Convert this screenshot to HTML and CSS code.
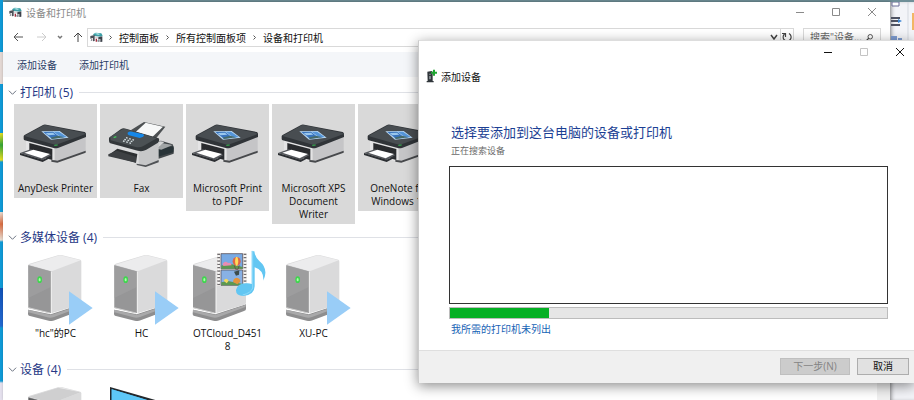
FILE: index.html
```html
<!DOCTYPE html>
<html lang="zh-CN">

<head>
    <meta charset="UTF-8">
    <title>设备和打印机</title>
    <link rel="stylesheet" href="styles.css">
</head>

<body>
    <!-- shared icons -->
    <svg class="sprite" aria-hidden="true">
        <symbol id="icon-app" viewBox="0 0 39 33">
            <path d="M9 7 L17 2 L34 4 L38 11 L31 14 L13 12 Z" fill="#3c9fa6"/>
            <path d="M14 5 L22 3 L31 6 L25 9 Z" fill="#a5dde0"/>
            <path d="M1 12 L14 9 L14 27 L9 28 L9 18 L1 20 Z" fill="#4b4f57"/>
            <path d="M15 13 L30 15 L30 20 L15 19 Z" fill="#d7d7d9"/>
            <path d="M17 20 L21 20 L21 29 L17 29 Z" fill="#a32c3c"/>
            <path d="M25 16 L37 13 L37 29 L31 30 L31 21 L25 23 Z" fill="#3d424b"/>
            <path d="M4 21 L7 21 L7 26 L2 27 Z M22 24 L29 23 L29 29 L23 30 Z" fill="#8a8f98"/>
        </symbol>
        <symbol id="icon-chevron" viewBox="0 0 10 10">
            <path d="M3 1 L7 5 L3 9" fill="none" stroke="#555" stroke-width="2"/>
        </symbol>
        <symbol id="icon-fold" viewBox="0 0 10 10">
            <path d="M1 3 L5 7 L9 3" fill="none" stroke="#5c6575" stroke-width="1"/>
        </symbol>
        <symbol id="icon-min" viewBox="0 0 10 10">
            <path d="M1 5.5 H9" fill="none" stroke="currentColor"/>
        </symbol>
        <symbol id="icon-max" viewBox="0 0 10 10">
            <path d="M1.5 1.5 H8.5 V8.5 H1.5 Z" fill="none" stroke="currentColor"/>
        </symbol>
        <symbol id="icon-close" viewBox="0 0 10 10">
            <path d="M1 1 L9 9 M9 1 L1 9" fill="none" stroke="currentColor"/>
        </symbol>

        <symbol id="printer" viewBox="0 0 249 234">
            <path d="M36 106 L122 128 L122 174 L36 153 Z" fill="#e4e4e5"/>
            <path d="M122 130 L215 96 L215 144 L130 173 L122 173 Z" fill="#c5c5c7"/>
            <path d="M122 169 L130 170 L215 140 L215 146 L130 176 L112 173 L112 168 Z" fill="#47494c"/>
            <path d="M46 117 L115 135 L115 168 L46 149 Z" fill="#292b2e"/>
            <path d="M18 147 L50 136 L113 153 L86 168 Z" fill="#55585d"/>
            <path d="M18 147 L86 167 L113 155 L113 160 L86 174 L18 153 Z" fill="#2c2f33"/>
            <path d="M31 146 L58 137 L108 150 L83 163 Z" fill="#fff"/>
            <path d="M29 97 Q29 94 33 92 L87 63 Q91 60 97 62 L212 84 Q217 86 216 93 L216 99 L132 132 Q125 134 119 132 L32 109 Q29 108 29 104 Z" fill="#303438"/>
            <path d="M31 96 L87 65 Q91 62 97 64 L212 87 L213 91 L131 121 Q124 123 118 121 Z" fill="#484d51"/>
            <path d="M82 82 L137 81 L164 101 L111 107 Z" fill="#b9d8f3"/>
            <path d="M88 84 L117 83 L140 101 L114 104 Z" fill="#3873bd"/>
            <path d="M119 83 L135 83 L158 99 L143 101 Z" fill="#5595d9"/>
            <path d="M95 87 L117 86 L124 92 L103 94 Z" fill="#9bc7ec"/>
            <path d="M109 101 L132 95 L151 100 L114 105 Z" fill="#476a69"/>
            <path d="M121 124 L131 123" stroke="#35bd4f" stroke-width="3"/>
        </symbol>

        <symbol id="fax" viewBox="0 0 249 234">
            <path d="M145 128 Q160 113 183 110 L218 121 L222 132 L221 149 L176 164 L145 160 Z" fill="#44494c"/>
            <path d="M148 148 Q148 125 171 114 Q183 109 192 115 Q184 128 171 133 L162 155 Z" fill="#d5d6d6"/>
            <path d="M173 135 L220 127 L220 145 L174 158 Z" fill="#293438"/>
            <path d="M171 134 L188 118 L218 123 L184 137 Z" fill="#a1a5a6"/>
            <path d="M32 108 L125 136 L125 182 L111 180 L30 158 Z" fill="#dadbdc"/>
            <path d="M116 136 L176 115 L176 174 L137 187 L116 182 Z" fill="#c6c7c8"/>
            <path d="M30 150 L52 134 L112 150 L108 176 L28 154 Z" fill="#2d3032"/>
            <path d="M25 151 L50 140 L108 158 L108 176 L25 157 Z" fill="#3d4043"/>
            <path d="M110 179 L137 184 L176 168 L176 175 L137 189 L110 183 Z" fill="#505356"/>
            <path d="M92 79 L132 54 L196 68 L166 106 Z" fill="#4c5052"/>
            <path d="M107 84 L137 56 L189 68 L157 99 Z" fill="#f7f8f8"/>
            <path d="M27 101 L62 76 Q69 71 78 74 L176 103 Q180 108 174 116 L139 137 Q127 144 113 140 L31 118 Q26 116 27 101 Z" fill="#33383b"/>
            <path d="M31 98 L65 77 Q70 73 79 76 L170 103 L130 126 Q120 132 107 129 L32 109 Z" fill="#4b5154"/>
            <path d="M83 86 Q88 81 96 83 L130 91 Q135 95 128 99 L119 102 L87 94 Q81 91 83 86 Z" fill="#1688e8"/>
            <path d="M78 101 L105 109 M73 106 L101 114 M69 111 L97 119" stroke="#d7e1e4" stroke-width="4" stroke-dasharray="5 5" fill="none"/>
            <path d="M41 101 L49 98" stroke="#42c65a" stroke-width="4"/>
        </symbol>

        <symbol id="server" viewBox="0 0 249 234">
            <path d="M43 182 L110 196 L202 166 L202 180 Q202 184 196 186 L122 214 Q114 218 104 215 L45 200 Q42 198 42 194 Z" fill="#8e8e8f"/>
            <path d="M43 182 L100 196 Q110 199 120 195 L202 167 L200 174 L120 204 Q110 208 100 205 L43 190 Z" fill="#a9a9aa"/>
            <path d="M43 49 Q42 46 47 44 L132 19 Q138 17 145 19 L199 32 Q203 34 202 40 L202 161 Q202 165 197 167 L112 193 L43 177 Z" fill="#dadadb"/>
            <path d="M45 47 L132 20 Q138 18 145 20 L200 34 L113 67 Z" fill="#ececed"/>
            <path d="M43 49 L109 67 Q112 68 112 72 L112 192 L106 192 L43 176 Z" fill="#969697"/>
            <path d="M43 49 L109 67 L109 115 L43 147 Z" fill="#a2a2a3" opacity=".6"/>
            <path d="M112 69 L112 192" stroke="#f5f5f5" stroke-width="3"/>
            <path d="M43 176 L108 192" stroke="#d0d0d0" stroke-width="3"/>
            <ellipse cx="77" cy="92" rx="7" ry="10" fill="#3fd64e"/>
            <ellipse cx="77" cy="92" rx="3" ry="5" fill="#aaffa8"/>
        </symbol>

        <symbol id="pc" viewBox="0 0 249 234">
            <use href="#server"/>
            <path d="M165 127 L236 177 L165 227 Z" fill="#99cdf7"/>
        </symbol>

        <symbol id="media" viewBox="0 0 249 234">
            <use href="#server" x="-22"/>
            <path d="M93 12 H182 V110 H93 Z" fill="#ece8e5"/>
            <path d="M98 14 V109 M177 14 V109" stroke="#706d70" stroke-width="8" stroke-dasharray="4 6"/>
            <path d="M98 14 V109 M177 14 V109" stroke="#f9f9f9" stroke-width="5" stroke-dasharray="5 5" stroke-dashoffset="5"/>
            <path d="M105 14 H170 V59 H105 Z" fill="#79aae4" stroke="#504248" stroke-width="2"/>
            <path d="M105 63 H170 V109 H105 Z" fill="#88b1e5" stroke="#504248" stroke-width="2"/>
            <path d="M106 50 L126 43 L170 54 V59 H106 Z M106 100 L126 96 L170 105 V109 H106 Z" fill="#5c9850"/>
            <path d="M110 44 Q118 33 126 42 Q136 38 137 49 L112 51 Z" fill="#e98cb2"/>
            <path d="M113 95 Q120 84 128 95 L122 103 Z" fill="#f3d85d"/>
            <ellipse cx="152" cy="37" rx="12" ry="13" fill="#df6747"/>
            <path d="M150 24 Q144 37 150 50 L154 50 Q160 37 154 24 Z" fill="#ffdc58"/>
            <path d="M145 50 L149 61 H156 L160 49" fill="none" stroke="#633b40" stroke-width="2"/>
            <path d="M141 99 Q142 87 152 86 Q163 87 163 98 L154 106 Z" fill="#e4943c"/>
            <path d="M144 68 L150 80 L159 77 L160 64 Z" fill="#3c4b4d"/>
            <path d="M197 7 H205 Q207 24 220 36 Q249 60 232 95 Q234 64 206 55 V112 Q205 139 172 141 Q149 140 150 123 Q154 104 179 103 Q190 102 197 105 Z" fill="#62c6f2"/>
            <path d="M197 7 H200 V117 Q195 132 170 138" fill="none" stroke="#8ddafa" stroke-width="3"/>
        </symbol>

        <symbol id="tower" viewBox="0 0 249 234">
            <use href="#server"/>
            <path d="M44 50 L110 68 V192 L44 176 Z" fill="#5d5e60"/>
            <path d="M45 47 L132 20 L200 34 L113 67 Z" fill="#cfcfd0"/>
        </symbol>

        <symbol id="monitor" viewBox="0 0 249 234">
            <path d="M30 18 L180 61 V185 L30 130 Z" fill="#24282c"/>
            <path d="M35 25 L175 67 V177 L35 125 Z" fill="#42b7ef"/>
            <path d="M35 25 L175 67 V93 L35 70 Z" fill="#5dc7f7"/>
        </symbol>
    </svg>

    <div class="window">
        <header class="titlebar">
            <svg class="app-icon"><use href="#icon-app"/></svg>
            <span class="caption">设备和打印机</span>
            <div class="controls">
                <button aria-label="最小化"><svg><use href="#icon-min"/></svg></button>
                <button aria-label="最大化"><svg><use href="#icon-max"/></svg></button>
                <button aria-label="关闭"><svg><use href="#icon-close"/></svg></button>
            </div>
        </header>

        <div class="navbar">
            <div class="history">
                <button aria-label="后退"><svg viewBox="0 0 12 12"><path d="M11 6 H2 M6 2 L2 6 L6 10" fill="none" stroke="#555"/></svg></button>
                <button aria-label="前进" disabled><svg viewBox="0 0 12 12"><path d="M1 6 H10 M6 2 L10 6 L6 10" fill="none" stroke="#ccc"/></svg></button>
                <button class="recent" aria-label="最近浏览的位置"><svg viewBox="0 0 12 12"><path d="M4 5 L6 7 L8 5" fill="none" stroke="#777" stroke-width="1.5"/></svg></button>
                <button aria-label="上移"><svg viewBox="0 0 12 12"><path d="M6 11 V2 M2 6 L6 2 L10 6" fill="none" stroke="#444"/></svg></button>
            </div>
            <div class="address">
                <svg class="app-icon"><use href="#icon-app"/></svg>
                <nav class="breadcrumb">
                    <svg><use href="#icon-chevron"/></svg>
                    <a href="#">控制面板</a>
                    <svg><use href="#icon-chevron"/></svg>
                    <a href="#">所有控制面板项</a>
                    <svg><use href="#icon-chevron"/></svg>
                    <a href="#">设备和打印机</a>
                </nav>
                <button class="dropdown" aria-label="上一个位置"><svg viewBox="0 0 12 12"><path d="M3 4 L6 8 L9 4" fill="none" stroke="#444" stroke-width="1.5"/></svg></button>
                <button class="refresh" aria-label="刷新"><svg viewBox="0 0 12 12"><path d="M8 2.5 A4 4 0 1 1 3.5 3 M1 2.5 H4.5 V6" fill="none" stroke="#444" stroke-width="1.2"/></svg></button>
            </div>
            <div class="search">
                <input type="text" aria-label="搜索" placeholder='搜索"设备...'>
                <svg viewBox="0 0 12 12"><circle cx="7" cy="5" r="3" fill="none" stroke="#444" stroke-width="1.2"/><path d="M5 7 L1 11" stroke="#444" stroke-width="1.5"/></svg>
            </div>
        </div>

        <div class="toolbar">
            <button>添加设备</button>
            <button>添加打印机</button>
        </div>

        <main class="content">
            <section>
                <h2><svg><use href="#icon-fold"/></svg>打印机 (5)</h2>
                <ul class="items">
                    <li class="item selected"><svg><use href="#printer"/></svg><span>AnyDesk Printer</span></li>
                    <li class="item selected"><svg><use href="#fax"/></svg><span>Fax</span></li>
                    <li class="item selected"><svg><use href="#printer"/></svg><span>Microsoft Print to PDF</span></li>
                    <li class="item selected"><svg><use href="#printer"/></svg><span>Microsoft XPS Document Writer</span></li>
                    <li class="item selected"><svg><use href="#printer"/></svg><span>OneNote for Windows 10</span></li>
                </ul>
            </section>
            <section>
                <h2><svg><use href="#icon-fold"/></svg>多媒体设备 (4)</h2>
                <ul class="items">
                    <li class="item"><svg><use href="#pc"/></svg><span>"hc"的PC</span></li>
                    <li class="item"><svg><use href="#pc"/></svg><span>HC</span></li>
                    <li class="item"><svg><use href="#media"/></svg><span>OTCloud_D451<br>8</span></li>
                    <li class="item"><svg><use href="#pc"/></svg><span>XU-PC</span></li>
                </ul>
            </section>
            <section>
                <h2><svg><use href="#icon-fold"/></svg>设备 (4)</h2>
                <ul class="items">
                    <li class="item"><svg><use href="#tower"/></svg></li>
                    <li class="item"><svg><use href="#monitor"/></svg></li>
                </ul>
            </section>
        </main>
    </div>

    <!-- strip of the window behind -->
    <aside class="behind">
        <svg viewBox="0 0 24 40">
            <path d="M2 0 H9 V4 H2 Z" fill="#fff" stroke="#6b6d98"/>
            <path d="M1 16 H10 M1 19 H8 M1 23 H10" stroke="#4e5261" stroke-width="2"/>
            <path d="M8 17 L12 19 L8 21 Z" fill="#3c86d4"/>
            <path d="M1 34 H7 V39 H1 Z M8 36 H12 V40 H8 Z" fill="#7e9cd0"/>
            <path d="M18 0 V40" stroke="#d5d9e0"/>
            <path d="M22 11 H24 V28 H22 Z" fill="#f2b665"/>
        </svg>
    </aside>

    <div class="dialog" role="dialog" aria-labelledby="dialogTitle">
        <div class="controls">
            <button aria-label="最小化"><svg><use href="#icon-min"/></svg></button>
            <button aria-label="最大化" disabled><svg><use href="#icon-max"/></svg></button>
            <button aria-label="关闭"><svg><use href="#icon-close"/></svg></button>
        </div>
        <div class="dialog-name">
            <svg viewBox="0 0 33 42">
                <path d="M4 8 L17 6 L20 9 V36 H23 V40 H2 V36 H5 Z" fill="#30363b"/>
                <path d="M9 14 H15 V17 H9 Z M9 21 H15 V31 H9 Z" fill="#7e868b"/>
                <path d="M21 2 H27 V8 H33 V14 H27 V20 H21 V14 H15 V8 H21 Z" fill="#20a632"/>
            </svg>
            <span id="dialogTitle">添加设备</span>
        </div>
        <div class="dialog-body">
            <h1>选择要添加到这台电脑的设备或打印机</h1>
            <label for="searchProgress">正在搜索设备</label>
            <div class="device-list" role="listbox" aria-label="设备"></div>
            <progress id="searchProgress" value="227" max="1000"></progress>
            <a href="#">我所需的打印机未列出</a>
        </div>
        <footer class="dialog-footer">
            <button class="next" disabled>下一步(N)</button>
            <button class="cancel">取消</button>
        </footer>
    </div>
</body>

</html>
```
FILE: styles.css
```css
* {
    box-sizing: border-box;
}

body {
    margin: 0;
    height: 100vh;
    overflow: hidden;
    position: relative;
    display: flex;
    padding-top: 2px;
    padding-left: 3px;
    font-family: "Open Sans", "Noto Sans CJK SC", sans-serif;
    font-size: 10px;
    color: #111;
    background: linear-gradient(90deg, transparent 3px, #6f8f98 3px) top / 100% 2px no-repeat,
        linear-gradient(#109bd8 52px, #e3d8d4 52px, #e3d8d4 84px, #109bd8 84px, #109bd8 133px, #e8df22 133px, #35a637 145px, #e8df22 160px, #109bd8 162px, #109bd8 212px, #e8ddd2 212px, #d96d42 224px, #e8ddd2 240px, #109bd8 242px, #109bd8 288px, #1253b8 288px, #2369d0 326px, #109bd8 328px, #109bd8 381px, #e5e1ee 383px);
}

button,
input {
    font: inherit;
    color: inherit;
}

.sprite {
    position: absolute;
    width: 0;
    height: 0;
}

.window {
    flex: 1;
    min-width: 0;
    display: flex;
    flex-direction: column;
    background: #fff;
    box-shadow: 1px 0 3px rgba(0, 0, 0, 0.4);
}

.behind {
    width: 24px;
    background: #f3f4f8;
    box-shadow: inset 3px 0 4px -2px rgba(0, 0, 0, 0.5);
}

.behind svg {
    display: block;
    width: 24px;
    height: 40px;
}

.titlebar {
    display: flex;
    align-items: center;
    flex: none;
    height: 20px;
    padding-left: 6px;
    color: #8a8a8a;
}

.app-icon {
    width: 13px;
    height: 11px;
    flex: none;
}

.caption {
    margin-left: 4px;
}

.controls {
    display: flex;
    margin-left: auto;
}

.controls button {
    display: flex;
    align-items: center;
    justify-content: center;
    width: 36px;
    height: 20px;
    padding: 0;
    border: none;
    background: none;
}

.controls svg {
    width: 10px;
    height: 10px;
}

.navbar {
    display: flex;
    align-items: center;
    flex: none;
    height: 30px;
    padding-right: 9px;
}

.history {
    display: flex;
    align-items: center;
    gap: 12px;
    padding: 0 3px 0 9px;
}

.history button,
.address button {
    display: flex;
    padding: 0;
    border: none;
    background: none;
}

.history .recent {
    margin: 0 -6px;
}

.history svg {
    width: 12px;
    height: 12px;
}

.address {
    flex: 1;
    display: flex;
    align-items: center;
    height: 19px;
    padding-left: 2px;
    border: 1px solid #d9d9d9;
}

.breadcrumb {
    flex: 1;
    display: flex;
    align-items: center;
    gap: 6px;
    padding-left: 5px;
}

.breadcrumb svg {
    width: 5px;
    height: 5px;
}

.breadcrumb a {
    color: #111;
    text-decoration: none;
}

.address button {
    align-items: center;
    height: 17px;
}

.address button svg {
    width: 12px;
    height: 12px;
}

.address .refresh {
    border-left: 1px solid #d9d9d9;
}

.search {
    display: flex;
    align-items: center;
    width: 78px;
    height: 19px;
    margin-left: 9px;
    padding: 0 6px;
    border: 1px solid #d9d9d9;
}

.search input {
    flex: 1;
    min-width: 0;
    padding: 0;
    border: none;
    outline: none;
    background: none;
}

.search input::placeholder {
    color: #666;
}

.search svg {
    width: 9px;
    height: 9px;
}

.toolbar {
    display: flex;
    flex: none;
    gap: 22px;
    height: 25px;
    padding-left: 14px;
    background: #f4f6f9;
}

.toolbar button {
    padding: 0;
    border: none;
    background: none;
    color: #2a3c66;
}

.content {
    flex: 1;
    min-height: 0;
    overflow: hidden;
    padding: 3px 16px 0 5px;
    background: linear-gradient(#f0f0f0, #f0f0f0) right / 13px 100% no-repeat;
}

h2 {
    display: flex;
    align-items: center;
    gap: 3px;
    height: 24px;
    margin: 0;
    font-size: 12px;
    font-weight: normal;
    color: #253785;
}

h2::after {
    content: "";
    flex: 1;
    height: 1px;
    margin-left: 3px;
    background: #dfe1e6;
}

h2 svg {
    width: 9px;
    height: 9px;
}

.items {
    display: flex;
    align-items: flex-start;
    gap: 3px;
    margin: 0;
    padding: 0 0 1px 6px;
    list-style: none;
}

.item {
    width: 83px;
    padding-bottom: 3px;
    line-height: 13px;
    text-align: center;
}

.item svg {
    display: block;
    width: 83px;
    height: 78px;
}

.item span {
    display: block;
    padding: 0 2px;
}

.selected {
    background: #d9d9d9;
}

.dialog {
    position: absolute;
    top: 40px;
    left: 418px;
    right: 0;
    background: #fff;
    border-left: 1px solid #ccc;
    border-top: 1px solid #ddd;
    box-shadow: 0 3px 12px rgba(0, 0, 0, 0.45);
}

.dialog .controls {
    justify-content: flex-end;
    margin-right: -4px;
}

.dialog .controls button {
    height: 22px;
}

.controls button:disabled {
    color: #c4c4c4;
}

.dialog-name {
    display: flex;
    align-items: center;
    gap: 4px;
    height: 26px;
    padding-left: 7px;
}

.dialog-name svg {
    width: 11px;
    height: 14px;
}

.dialog-body {
    display: flex;
    flex-direction: column;
    align-items: flex-start;
    padding: 33px 26px 13px 30px;
}

h1 {
    margin: 0 0 0 2px;
    font-size: 13px;
    font-weight: normal;
    line-height: 20px;
    color: #1c3f94;
}

.dialog-body label {
    margin-left: 2px;
    font-size: 9px;
    line-height: 18px;
    color: #6a6a6a;
}

.device-list {
    align-self: stretch;
    height: 138px;
    margin: 6px 0 3px;
    border: 1px solid #333;
}

progress {
    align-self: stretch;
    width: 100%;
    height: 12px;
    appearance: none;
    border: 1px solid #bcbcbc;
}

progress::-webkit-progress-bar {
    background: #e6e6e6;
}

progress::-webkit-progress-value {
    background: #06b025;
}

.dialog-body a {
    margin: 2px 0 0 2px;
    line-height: 16px;
    color: #1763b5;
    text-decoration: none;
}

.dialog-footer {
    display: flex;
    justify-content: flex-end;
    gap: 7px;
    padding: 7px 5px 8px;
    background: #f0f0f0;
    border-top: 1px solid #dfdfdf;
}

.dialog-footer button {
    height: 17px;
    padding: 0;
    border: 1px solid #adadad;
    background: #e1e1e1;
    line-height: 15px;
}

.dialog-footer .next {
    width: 70px;
    border-color: #bfbfbf;
    background: #ccc;
    color: #838383;
}

.dialog-footer .cancel {
    width: 52px;
}
```
